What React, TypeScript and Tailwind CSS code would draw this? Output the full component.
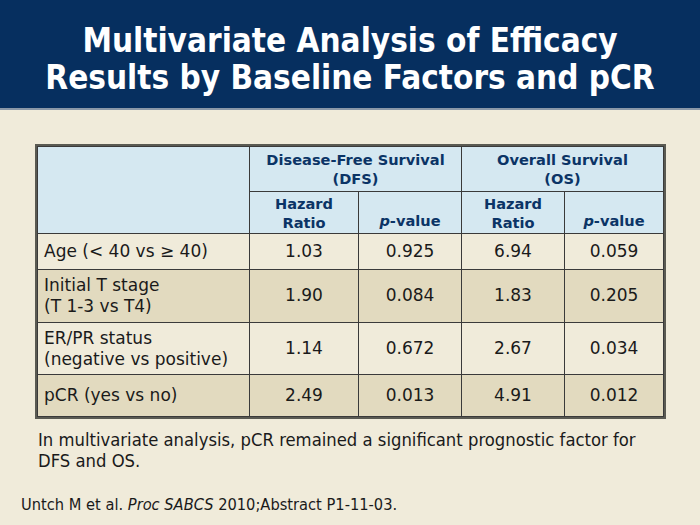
import React from "react";

const rows = [
  { label: ["Age (< 40 vs ≥ 40)"], vals: ["1.03", "0.925", "6.94", "0.059"], dark: false, h: "h-[36px]" },
  { label: ["Initial T stage", "(T 1-3 vs T4)"], vals: ["1.90", "0.084", "1.83", "0.205"], dark: true, h: "h-[53px]" },
  { label: ["ER/PR status", "(negative vs positive)"], vals: ["1.14", "0.672", "2.67", "0.034"], dark: false, h: "h-[52px]" },
  { label: ["pCR (yes vs no)"], vals: ["2.49", "0.013", "4.91", "0.012"], dark: true, h: "h-[42px]" },
];

const cell = "border border-[#3a3a3a]";
const head = "bg-[#d5e8f1] text-[#0b3466] font-bold text-[14.6px] leading-[19px] text-center";

export default function App() {
  return (
    <div className="w-[700px] h-[525px] bg-[#f0ebda] flex flex-col overflow-hidden [font-family:'DejaVu_Sans',Verdana,sans-serif]">
      <div className="h-[110px] bg-[#062f5f] border-b-2 border-[#8a98a8] flex flex-col items-center justify-center text-white font-bold text-[33px] leading-[37px] [font-family:'DejaVu_Sans_Condensed','DejaVu_Sans',sans-serif] pt-[10px]">
        <div>Multivariate Analysis of Efficacy</div>
        <div>Results by Baseline Factors and pCR</div>
      </div>

      <div className="mt-[34px] ml-[35px] w-[631px] border-2 border-[#5a5a52]">
        <table className="w-full border-collapse text-[#1a1a1a] text-[17px]">
          <colgroup>
            <col className="w-[212px]" />
            <col className="w-[109px]" />
            <col className="w-[103px]" />
            <col className="w-[103px]" />
            <col />
          </colgroup>
          <thead>
            <tr className="h-[45px]">
              <th rowSpan={2} className={`${cell} bg-[#d5e8f1]`}></th>
              <th colSpan={2} className={`${cell} ${head}`}>Disease-Free Survival<br />(DFS)</th>
              <th colSpan={2} className={`${cell} ${head}`}>Overall Survival<br />(OS)</th>
            </tr>
            <tr className="h-[42px]">
              <th className={`${cell} ${head}`}>Hazard<br />Ratio</th>
              <th className={`${cell} ${head} align-bottom pb-[3px]`}><i>p</i>-value</th>
              <th className={`${cell} ${head}`}>Hazard<br />Ratio</th>
              <th className={`${cell} ${head} align-bottom pb-[3px]`}><i>p</i>-value</th>
            </tr>
          </thead>
          <tbody>
            {rows.map((r) => (
              <tr key={r.label[0]} className={`${r.h} ${r.dark ? "bg-[#e2dabf]" : "bg-[#f0ebda]"}`}>
                <td className={`${cell} pl-[6px] leading-[21px]`}>
                  {r.label.map((l) => (
                    <div key={l}>{l}</div>
                  ))}
                </td>
                {r.vals.map((v, i) => (
                  <td key={i} className={`${cell} text-center`}>{v}</td>
                ))}
              </tr>
            ))}
          </tbody>
        </table>
      </div>

      <div className="mt-[10px] ml-[38px] text-[18.3px] leading-[21px] text-[#1a1a1a] [font-family:'DejaVu_Sans_Condensed','DejaVu_Sans',sans-serif]">
        In multivariate analysis, pCR remained a significant prognostic factor for
        <br />
        DFS and OS.
      </div>

      <div className="mt-[24px] ml-[21px] text-[16.3px] leading-[20px] text-[#1a1a1a] [font-family:'DejaVu_Sans_Condensed','DejaVu_Sans',sans-serif]">
        Untch M et al. <i>Proc SABCS</i> 2010;Abstract P1-11-03.
      </div>
    </div>
  );
}
